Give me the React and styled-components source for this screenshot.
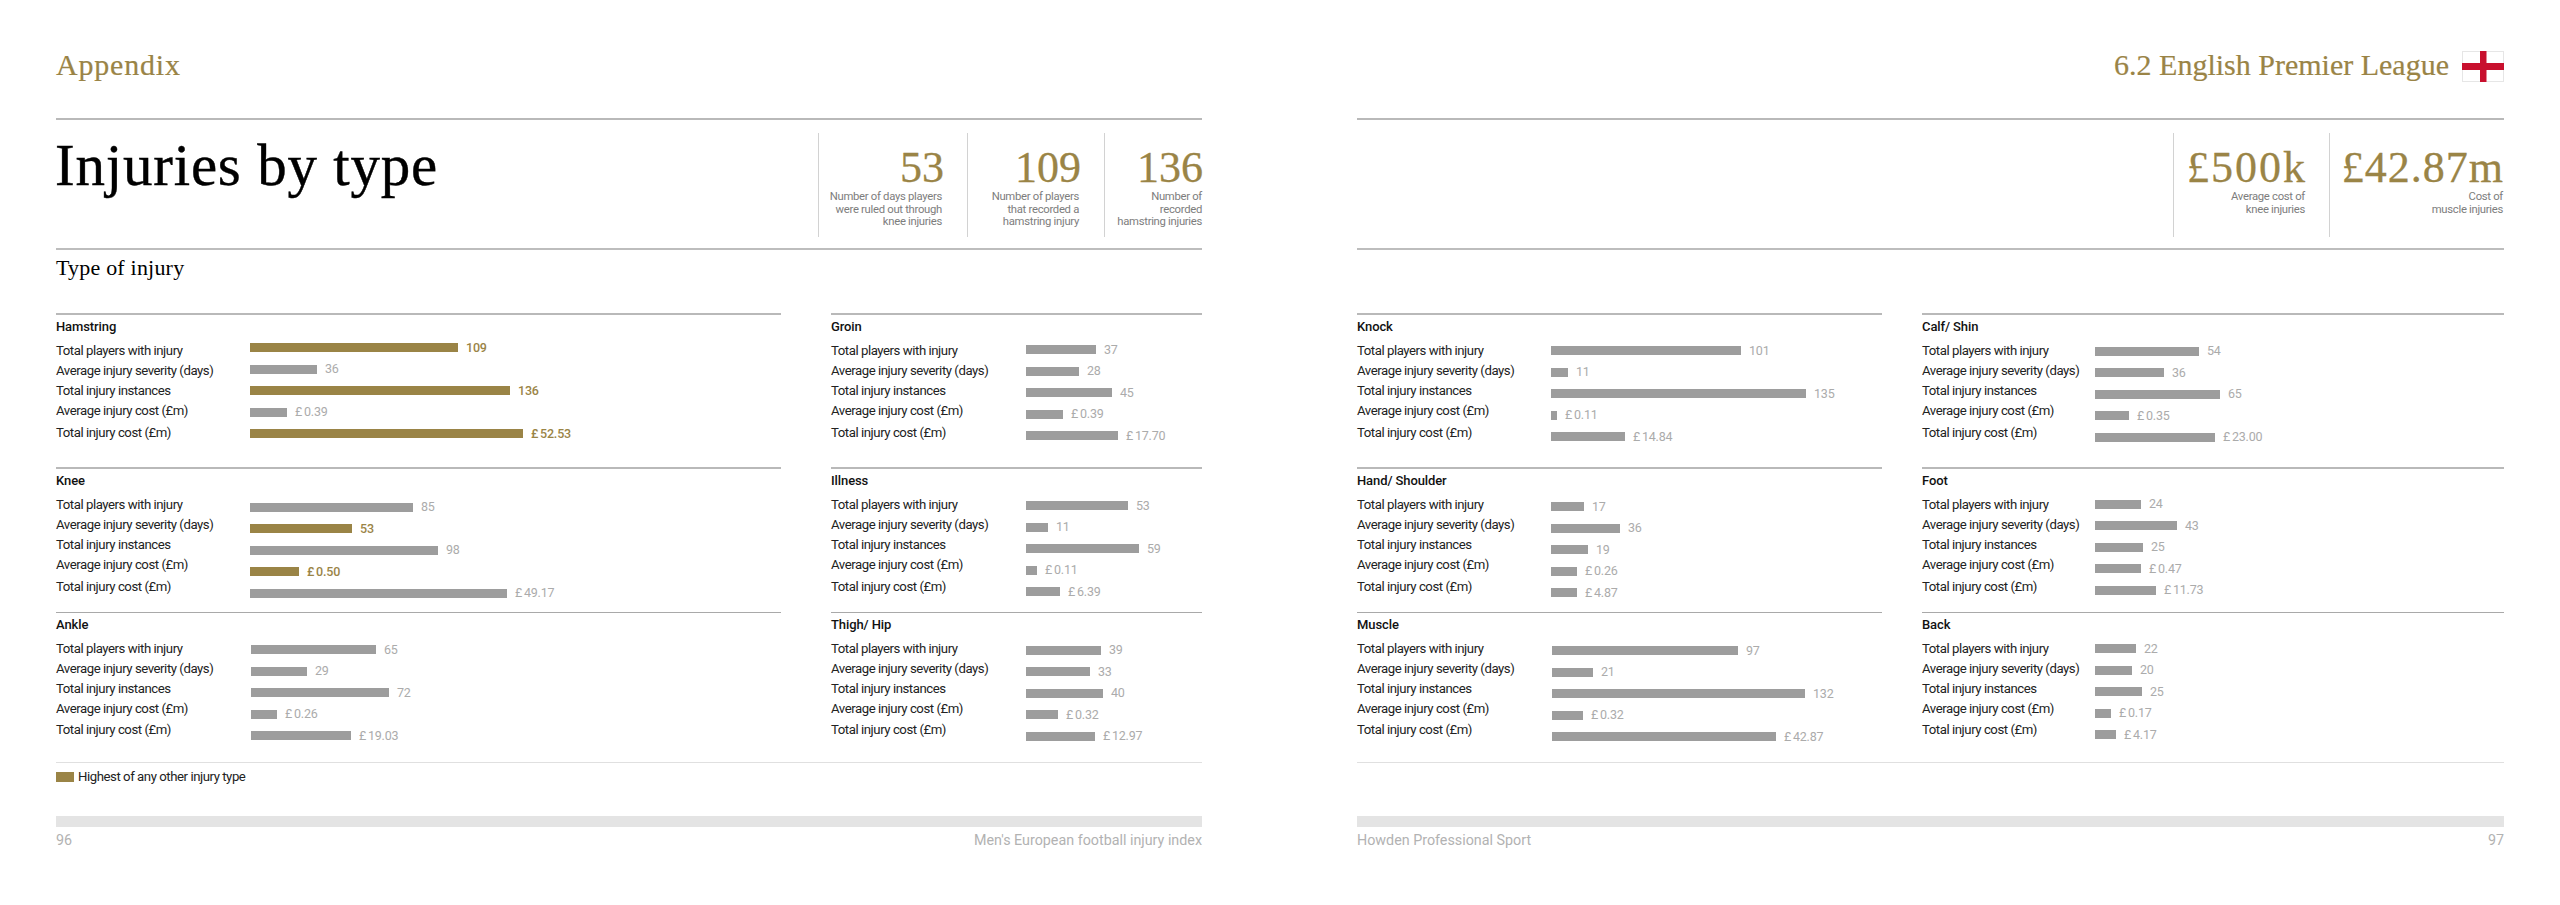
import React from 'react';
import styled, { createGlobalStyle } from 'styled-components';

const GOLD = '#9a8446';
const SERIF = '"Liberation Serif", serif';
const SANS = 'Roboto, "Liberation Sans", sans-serif';

const GlobalStyle = createGlobalStyle`
  html, body {
    margin: 0;
    padding: 0;
    background: #fff;
  }
  body {
    font-family: ${SANS};
  }
`;

const Spread = styled.div`
  width: 2560px;
  height: 905px;
  box-sizing: border-box;
  padding: 0 56px;
  display: grid;
  grid-template-columns: 1146px 1147px;
  column-gap: 155px;
  overflow: hidden;
`;

const Page = styled.div`
  display: flex;
  flex-direction: column;
`;

const TopBar = styled.div`
  height: 118px;
  box-sizing: border-box;
  padding-top: 48px;
  display: flex;
  justify-content: ${(p) => (p.$right ? 'flex-end' : 'flex-start')};
  gap: 13px;
`;

const Running = styled.div`
  font-family: ${SERIF};
  font-size: 30px;
  line-height: 34px;
  letter-spacing: ${(p) => p.$track}px;
  color: ${GOLD};
  -webkit-text-stroke: 0.2px ${GOLD};
`;

const Flag = styled.svg`
  display: block;
  margin-top: 3px;
`;

const Hero = styled.div`
  height: 130px;
  box-sizing: border-box;
  border-top: 2px solid #b9b9b9;
  display: flex;
  justify-content: space-between;
`;

const Title = styled.h1`
  margin: 11px 0 0 -1px;
  font-family: ${SERIF};
  font-weight: 400;
  font-size: 59px;
  line-height: 68px;
  letter-spacing: 0.8px;
  color: #000;
  -webkit-text-stroke: 0.4px #000;
`;

const Stats = styled.div`
  display: flex;
  margin-top: 13px;
  margin-left: auto;
  height: 104px;
`;

const Stat = styled.div`
  width: ${(p) => p.$w}px;
  box-sizing: border-box;
  border-left: 1px solid #d2d2d2;
  padding-right: ${(p) => p.$pad}px;
  text-align: right;
`;

const StatNumber = styled.div`
  margin-top: 12px;
  font-family: ${SERIF};
  font-size: 44px;
  line-height: 46px;
  letter-spacing: ${(p) => p.$track || 0}px;
  color: ${GOLD};
  -webkit-text-stroke: 0.3px ${GOLD};
  white-space: nowrap;
  margin-right: ${(p) => (p.$last ? -1 : -2)}px;
`;

const StatCaption = styled.div`
  font-size: 11.3px;
  line-height: 12.7px;
  letter-spacing: -0.3px;
  color: #7d7d7d;
  white-space: pre;
`;

const SubHead = styled.div`
  height: 65px;
  box-sizing: border-box;
  border-top: 2px solid #bdbdbd;
  font-family: ${SERIF};
  font-size: 22px;
  line-height: 26px;
  letter-spacing: 0.2px;
  padding-top: 5px;
  color: #000;
`;

const Columns = styled.div`
  display: grid;
  grid-template-columns: ${(p) => p.$cols};
  grid-template-rows: 154px 144.5px 150.5px;
  column-gap: ${(p) => p.$gap}px;
  grid-auto-flow: column;
`;

const Section = styled.section`
  border-top: ${(p) => (p.$thin ? '1px solid #a9a9a9' : '2px solid #b9b9b9')};
  display: grid;
  grid-template-columns: ${(p) => p.$labelW}px 1fr;
  grid-template-rows: 26px auto;
  align-content: start;
`;

const SectionName = styled.h3`
  grid-column: 1 / -1;
  margin: 0;
  font-size: 13px;
  line-height: 24px;
  font-weight: 500;
  letter-spacing: -0.1px;
  color: #111;
`;

const LabelStack = styled.div`
  display: flex;
  flex-direction: column;
`;

const Label = styled.div`
  font-size: 13.2px;
  line-height: 20px;
  letter-spacing: -0.45px;
  color: #222;
  white-space: nowrap;
  &:last-child {
    margin-top: 1.5px;
  }
`;

const BarStack = styled.div`
  display: flex;
  flex-direction: column;
`;

const BarRow = styled.div`
  height: 21.5px;
  display: flex;
  align-items: center;
  gap: 8px;
`;

const Bar = styled.div`
  height: 9px;
  background: ${(p) => (p.$hi ? GOLD : '#9d9d9d')};
`;

const Value = styled.span`
  font-size: 12.5px;
  line-height: 14px;
  letter-spacing: -0.2px;
  word-spacing: -1px;
  font-weight: ${(p) => (p.$hi ? 500 : 400)};
  color: ${(p) => (p.$hi ? GOLD : '#ababab')};
  white-space: nowrap;
`;

const LegendRow = styled.div`
  height: 54px;
  box-sizing: border-box;
  border-top: 1px solid #e0e0e0;
  padding-top: 4px;
  display: flex;
  align-items: flex-start;
  gap: 4px;
  font-size: 13.2px;
  line-height: 20px;
  letter-spacing: -0.45px;
  color: #222;
`;

const Swatch = styled.div`
  width: 18px;
  height: 10px;
  margin-top: 5px;
  background: ${GOLD};
`;

const FooterBand = styled.div`
  height: 11px;
  background: #e4e4e4;
`;

const FooterText = styled.div`
  display: flex;
  justify-content: space-between;
  margin-top: 3px;
  font-size: 14.3px;
  line-height: 20px;
  color: #b2b2b2;
`;

const labels = [
  'Total players with injury',
  'Average injury severity (days)',
  'Total injury instances',
  'Average injury cost (£m)',
  'Total injury cost (£m)',
];

// c = centre of the first bar below the section rule, bars = [value, width, highlighted]
const leftA = [
  { name: 'Hamstring', c: 34.5, bars: [['109', 208, 1], ['36', 67], ['136', 260, 1], ['£ 0.39', 37], ['£ 52.53', 273, 1]] },
  { name: 'Knee', c: 40, bars: [['85', 163], ['53', 102, 1], ['98', 188], ['£ 0.50', 49, 1], ['£ 49.17', 257]] },
  { name: 'Ankle', c: 39, x: 1, thin: 1, bars: [['65', 125], ['29', 56], ['72', 138], ['£ 0.26', 26], ['£ 19.03', 100]] },
];

const leftB = [
  { name: 'Groin', c: 36.7, bars: [['37', 70], ['28', 53], ['45', 86], ['£ 0.39', 37], ['£ 17.70', 92]] },
  { name: 'Illness', c: 38.7, bars: [['53', 102], ['11', 22], ['59', 113], ['£ 0.11', 11], ['£ 6.39', 34]] },
  { name: 'Thigh/ Hip', c: 39.7, thin: 1, bars: [['39', 75], ['33', 64], ['40', 77], ['£ 0.32', 32], ['£ 12.97', 69]] },
];

const rightA = [
  { name: 'Knock', c: 37.7, bars: [['101', 190], ['11', 17], ['135', 255], ['£ 0.11', 6], ['£ 14.84', 74]] },
  { name: 'Hand/ Shoulder', c: 39.7, bars: [['17', 33], ['36', 69], ['19', 37], ['£ 0.26', 26], ['£ 4.87', 26]] },
  { name: 'Muscle', c: 40.3, x: 1, thin: 1, bars: [['97', 186], ['21', 41], ['132', 253], ['£ 0.32', 31], ['£ 42.87', 224]] },
];

const rightB = [
  { name: 'Calf/ Shin', c: 38.3, bars: [['54', 104], ['36', 69], ['65', 125], ['£ 0.35', 34], ['£ 23.00', 120]] },
  { name: 'Foot', c: 37, bars: [['24', 46], ['43', 82], ['25', 48], ['£ 0.47', 46], ['£ 11.73', 61]] },
  { name: 'Back', c: 38, thin: 1, bars: [['22', 41], ['20', 37], ['25', 47], ['£ 0.17', 16], ['£ 4.17', 21]] },
];

const InjuryBlock = ({ item, labelW }) => (
  <Section $thin={item.thin} $labelW={labelW + (item.x || 0)}>
    <SectionName>{item.name}</SectionName>
    <LabelStack>
      {labels.map((l) => (
        <Label key={l}>{l}</Label>
      ))}
    </LabelStack>
    <BarStack style={{ marginTop: item.c - 10.75 - 28 }}>
      {item.bars.map(([value, w, hi], i) => (
        <BarRow key={i}>
          <Bar $hi={hi} style={{ width: w }} />
          <Value $hi={hi}>{value}</Value>
        </BarRow>
      ))}
    </BarStack>
  </Section>
);

const EnglandFlag = () => (
  <Flag width="42" height="31" viewBox="0 0 42 31">
    <rect x="0.5" y="0.5" width="41" height="30" fill="#fff" stroke="#e6e6e6" />
    <rect x="18" y="0" width="6.5" height="31" fill="#c8102e" />
    <rect x="0" y="12" width="42" height="7" fill="#c8102e" />
  </Flag>
);

const App = () => (
  <>
    <GlobalStyle />
    <Spread>
      <Page>
        <TopBar>
          <Running $track={0.8}>Appendix</Running>
        </TopBar>
        <Hero>
          <Title>Injuries by type</Title>
          <Stats>
            <Stat $w={149.5} $pad={25}>
              <StatNumber>53</StatNumber>
              <StatCaption>{'Number of days players\nwere ruled out through\nknee injuries'}</StatCaption>
            </Stat>
            <Stat $w={137} $pad={25}>
              <StatNumber>109</StatNumber>
              <StatCaption>{'Number of players\nthat recorded a\nhamstring injury'}</StatCaption>
            </Stat>
            <Stat $w={98} $pad={0}>
              <StatNumber $last>136</StatNumber>
              <StatCaption>{'Number of\nrecorded\nhamstring injuries'}</StatCaption>
            </Stat>
          </Stats>
        </Hero>
        <SubHead>Type of injury</SubHead>
        <Columns $cols="725px 371px" $gap={50}>
          {leftA.map((item) => (
            <InjuryBlock key={item.name} item={item} labelW={194} />
          ))}
          {leftB.map((item) => (
            <InjuryBlock key={item.name} item={item} labelW={195} />
          ))}
        </Columns>
        <LegendRow>
          <Swatch />
          Highest of any other injury type
        </LegendRow>
        <FooterBand />
        <FooterText>
          <span>96</span>
          <span>Men's European football injury index</span>
        </FooterText>
      </Page>

      <Page>
        <TopBar $right>
          <Running $track={0}>6.2 English Premier League</Running>
          <EnglandFlag />
        </TopBar>
        <Hero>
          <Stats>
            <Stat $w={156} $pad={24}>
              <StatNumber $track={2}>£500k</StatNumber>
              <StatCaption>{'Average cost of\nknee injuries'}</StatCaption>
            </Stat>
            <Stat $w={175} $pad={1}>
              <StatNumber $last $track={1}>£42.87m</StatNumber>
              <StatCaption>{'Cost of\nmuscle injuries'}</StatCaption>
            </Stat>
          </Stats>
        </Hero>
        <SubHead />
        <Columns $cols="525px 582px" $gap={40}>
          {rightA.map((item) => (
            <InjuryBlock key={item.name} item={item} labelW={194} />
          ))}
          {rightB.map((item) => (
            <InjuryBlock key={item.name} item={item} labelW={173} />
          ))}
        </Columns>
        <LegendRow />
        <FooterBand />
        <FooterText>
          <span>Howden Professional Sport</span>
          <span>97</span>
        </FooterText>
      </Page>
    </Spread>
  </>
);

export default App;
